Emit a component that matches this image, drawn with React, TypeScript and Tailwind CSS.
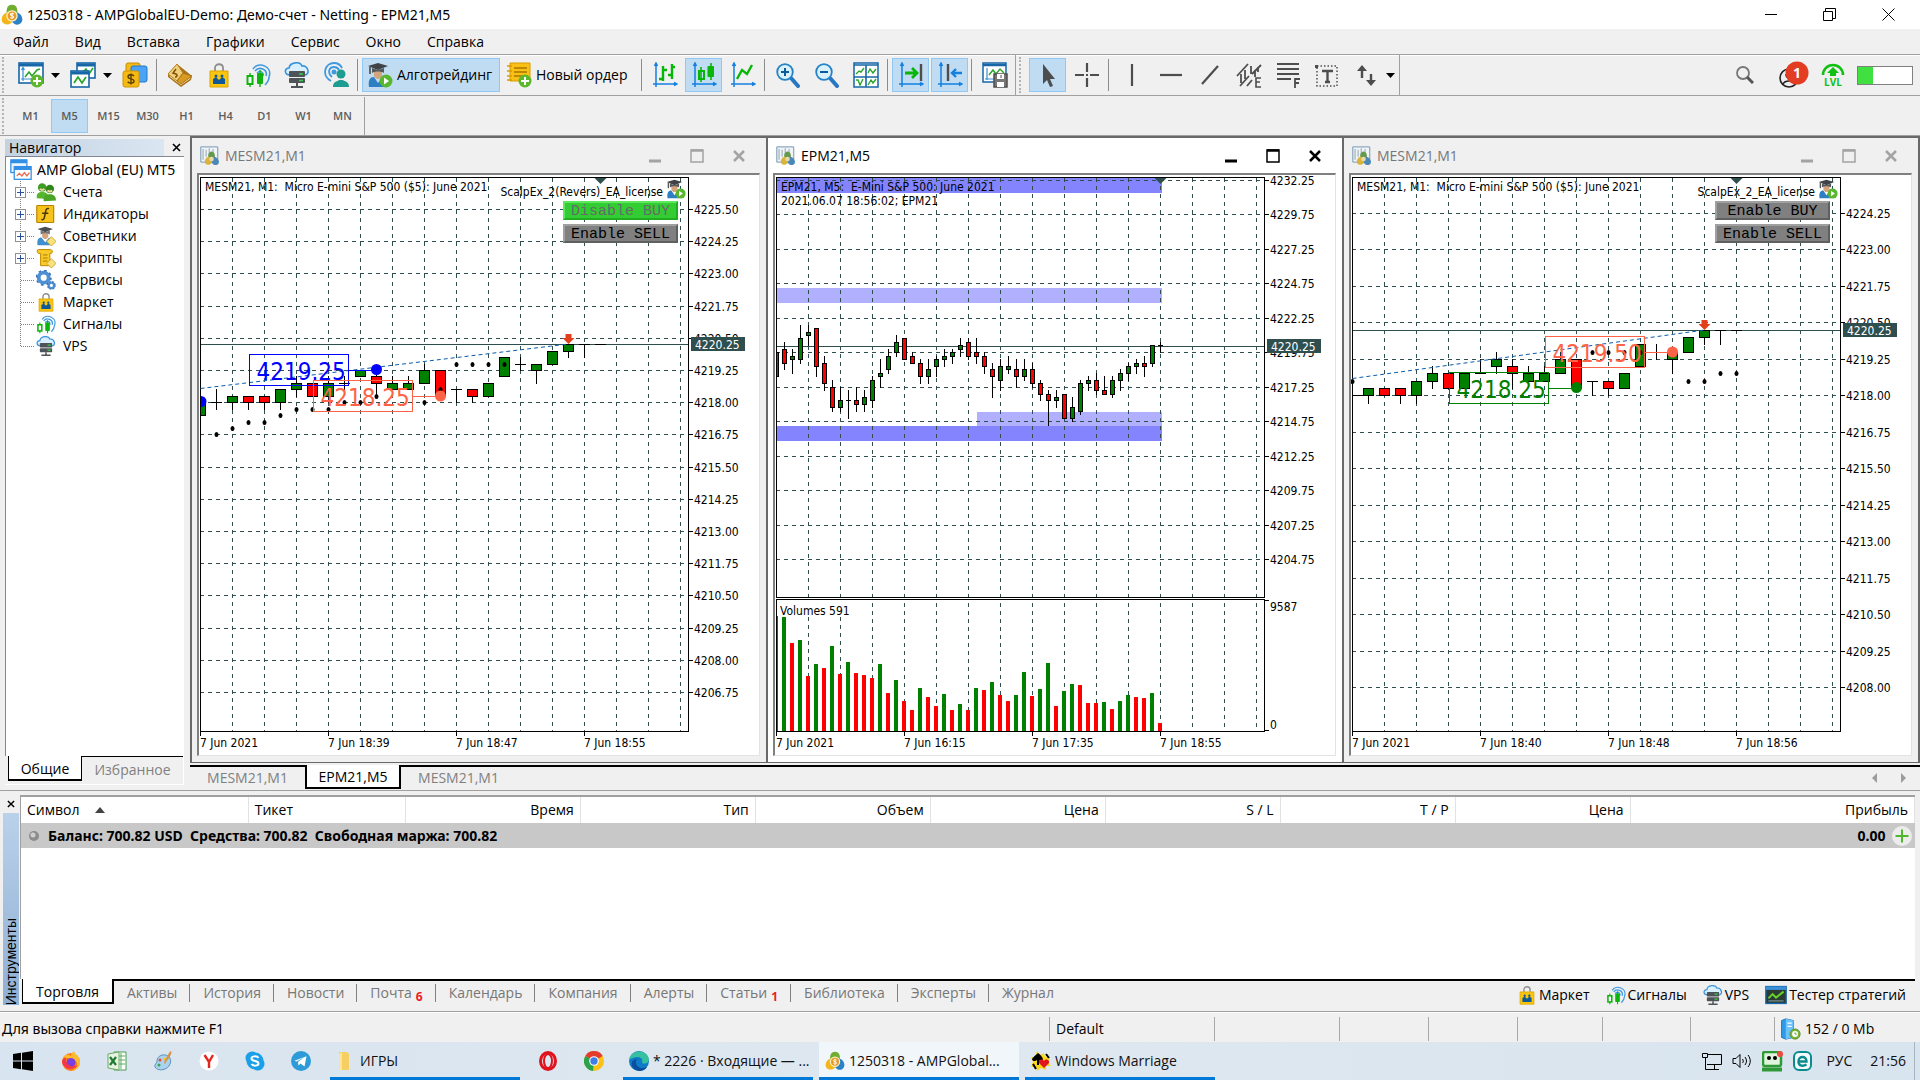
import React from "react";
import clsx from "clsx";

type Tone = "g" | "r" | "x";
// high, body top, body bottom, low, tone
type Candle = [number, number, number, number, Tone];

interface PriceTag {
  x: number;
  y: number;
  text: string;
  color: string;
  dotX: number;
  dotY: number;
}

interface ChartProps {
  title: string;
  note?: string;
  firstPrice: number;
  priceStep: number;
  firstY: number;
  stepY: number;
  rows: number;
  candles: Candle[];
  candleGap: number;
  bodyWidth: number;
  bidY: number;
  markerX: number;
  times: string[];
  bands?: [number, number, number, string][];
  volumes?: [number, Tone][];
  dots?: [number, number][];
  trend?: [number, number, number, number];
  tags?: PriceTag[];
  expert?: string;
  entryY?: number;
}

const GREEN = "#008000";
const RED = "#ff0000";
const SLATE = "#2f4f4f";

/* ---------- data ---------- */

// ticks of 0.25 below the first price on the scale
const candlesRevers: Candle[] = [
  [30, 30, 32, 32, "g"], [28, 30, 30, 31, "x"], [29, 29, 30, 31, "g"], [29, 29, 30, 31, "r"],
  [29, 29, 30, 31, "r"], [28, 28, 30, 31, "g"], [26, 27, 28, 29, "g"], [27, 27, 29, 29, "r"],
  [26, 27, 29, 30, "g"], [26, 27, 27, 28, "x"], [25, 25, 26, 26, "g"], [25, 26, 27, 29, "r"],
  [26, 27, 28, 28, "g"], [26, 27, 28, 28, "g"], [24, 25, 27, 27, "g"], [25, 25, 29, 29, "r"],
  [28, 28, 28, 30, "x"], [28, 28, 29, 30, "r"], [27, 27, 29, 29, "g"], [23, 23, 26, 26, "g"],
  [23, 24, 24, 25, "x"], [24, 24, 25, 27, "g"], [22, 22, 24, 24, "g"], [21, 21, 22, 23, "g"],
  [21, 21, 21, 23, "x"], [21, 21, 21, 21, "x"],
];

const dotsRevers: [number, number][] = [
  [1, 35], [2, 34], [3, 33], [4, 33], [5, 32], [6, 31], [7, 31], [8, 31], [9, 30], [10, 30],
  [11, 29], [14, 30], [15, 28], [16, 24], [17, 24], [18, 24], [19, 24],
];

const candlesMicro: Candle[] = [
  [25, 25, 25, 25, "x"], [24, 24, 25, 26, "g"], [24, 24, 25, 25, "r"], [24, 24, 25, 26, "r"],
  [23, 23, 25, 26, "g"], [21, 22, 23, 24, "g"], [22, 22, 24, 24, "r"], [22, 22, 24, 24, "g"],
  [20, 22, 22, 22, "x"], [19, 20, 21, 22, "g"], [20, 21, 22, 24, "r"], [21, 22, 23, 23, "g"],
  [21, 22, 23, 23, "g"], [19, 20, 22, 22, "g"], [20, 20, 24, 24, "r"], [23, 23, 23, 25, "x"],
  [23, 23, 24, 25, "r"], [22, 22, 24, 24, "g"], [18, 18, 21, 21, "g"], [18, 19, 19, 20, "x"],
  [19, 19, 20, 22, "g"], [17, 17, 19, 19, "g"], [16, 16, 17, 18, "g"], [16, 16, 16, 18, "x"],
  [16, 16, 16, 16, "x"],
];

const dotsMicro: [number, number][] = [
  [0, 23], [15, 19], [16, 19], [17, 19], [18, 19], [21, 23], [22, 23], [23, 22], [24, 22],
];

const candlesMini: Candle[] = [
  [50, 50, 57, 57, "g"], [47, 49, 53, 55, "r"], [49, 51, 52, 56, "g"], [42, 46, 52, 53, "g"],
  [42, 44, 45, 48, "g"], [43, 43, 54, 57, "r"], [51, 53, 59, 61, "r"], [58, 60, 66, 67, "r"],
  [60, 64, 66, 67, "g"], [61, 64, 64, 69, "x"], [60, 64, 65, 67, "r"], [61, 63, 65, 67, "g"],
  [57, 58, 64, 66, "g"], [52, 56, 57, 60, "g"], [49, 51, 55, 56, "g"], [45, 47, 50, 51, "g"],
  [46, 46, 52, 52, "r"], [50, 51, 53, 53, "r"], [52, 53, 57, 59, "r"], [52, 55, 57, 59, "g"],
  [51, 52, 54, 57, "g"], [49, 51, 52, 54, "g"], [49, 50, 51, 53, "g"], [46, 48, 49, 51, "g"],
  [46, 47, 51, 52, "r"], [46, 50, 51, 53, "r"], [50, 51, 54, 56, "r"], [53, 55, 57, 63, "r"],
  [52, 54, 58, 61, "g"], [51, 54, 55, 56, "g"], [52, 55, 57, 60, "r"], [52, 55, 57, 58, "g"],
  [53, 55, 59, 60, "r"], [58, 59, 62, 64, "r"], [61, 62, 64, 71, "r"], [61, 63, 64, 66, "g"],
  [62, 62, 69, 69, "r"], [63, 66, 69, 70, "g"], [58, 59, 67, 68, "g"], [57, 58, 59, 61, "g"],
  [56, 58, 61, 62, "r"], [57, 61, 62, 62, "r"], [57, 58, 62, 63, "g"], [55, 56, 58, 61, "g"],
  [53, 54, 56, 58, "g"], [52, 53, 54, 56, "g"], [51, 53, 54, 57, "r"], [48, 48, 53, 54, "g"],
  [47, 48, 48, 50, "x"],
];

const volumesMini: [number, Tone][] = [
  [115, "g"], [114, "g"], [88, "r"], [91, "g"], [55, "r"], [67, "g"], [63, "r"], [85, "g"],
  [57, "r"], [69, "g"], [58, "r"], [56, "r"], [53, "r"], [67, "g"], [38, "r"], [51, "g"],
  [30, "r"], [21, "r"], [43, "g"], [34, "r"], [25, "r"], [37, "g"], [21, "r"], [27, "g"],
  [21, "r"], [43, "g"], [41, "r"], [49, "g"], [36, "r"], [30, "r"], [36, "g"], [59, "g"],
  [35, "r"], [42, "g"], [68, "g"], [25, "r"], [40, "g"], [47, "g"], [46, "r"], [28, "r"],
  [28, "r"], [29, "g"], [22, "r"], [30, "g"], [36, "g"], [34, "r"], [33, "r"], [38, "g"],
  [8, "r"],
];

/* ---------- icons ---------- */

const Svg = ({ size = 26, box = 26, children }: { size?: number; box?: number; children: React.ReactNode }) => (
  <svg width={size} height={size} viewBox={`0 0 ${box} ${box}`} fill="none" className="shrink-0">
    {children}
  </svg>
);

const Plus = ({ x, y }: { x: number; y: number }) => (
  <g>
    <circle cx={x} cy={y} r="6.5" fill="#5cb72b" />
    <path d={`M${x - 4} ${y}h8M${x} ${y - 4}v8`} stroke="#fff" strokeWidth="2" />
  </g>
);

const NewChartIcon = () => (
  <Svg>
    <rect x="1" y="1" width="24" height="20" fill="#fff" stroke="#1666a8" strokeWidth="1.6" />
    <path d="M1 3h24" stroke="#1666a8" strokeWidth="3" />
    <path d="M5 6v13M3 17h18M3.500 8 5 5.500 6.500 8" stroke="#3a8fd6" strokeWidth="1.2" />
    <path d="m7 15 4-5 3 4 5-6 3-1" stroke="#2ba52b" strokeWidth="1.6" />
    <Plus x={19} y={19} />
  </Svg>
);

const ProfilesIcon = () => (
  <Svg>
    <rect x="7" y="1" width="18" height="15" fill="#fff" stroke="#1666a8" strokeWidth="1.6" />
    <path d="M7 3h18" stroke="#1666a8" strokeWidth="3" />
    <path d="m12 11 4-4 3 5 4-6" stroke="#2ba52b" strokeWidth="1.6" />
    <rect x="1" y="9" width="18" height="16" fill="#fff" stroke="#1666a8" strokeWidth="1.6" />
    <path d="M1 11h18" stroke="#1666a8" strokeWidth="3" />
    <path d="m4 21 4-6 4 6 4-6" stroke="#2ba52b" strokeWidth="1.8" />
  </Svg>
);

const DollarIcon = () => (
  <Svg>
    <rect x="4" y="1" width="14" height="14" rx="2" fill="#f5b916" stroke="#c98c00" />
    <rect x="9" y="4" width="16" height="16" rx="2" fill="#4aa3f5" stroke="#2479c9" />
    <rect x="1" y="9" width="16" height="16" rx="2" fill="#f5b916" stroke="#d09500" />
    <path d="M12 14c-2-2-6-1.500-6 .800 0 2.700 6 1.500 6 4.400 0 2.300-4.500 2.600-6.300.500M9 11.500v11" stroke="#5b3f00" strokeWidth="1.400" />
  </Svg>
);

const BookIcon = () => (
  <Svg>
    <path d="M1 12 10 2l15 12-1 4-10 7L1 15z" fill="#a8741b" />
    <path d="m3 14 11 8 9-6" stroke="#fff2cb" strokeWidth="1.500" />
    <path d="M1 12 10 2l6 9-6 8z" fill="#f0cf7c" stroke="#b98424" />
    <path d="m10 19 6-8 9 3-11 8z" fill="#d99a20" stroke="#a8741b" />
    <path d="m9 7-3 4 3 1c2 1 1 3-1 3" stroke="#7d5106" strokeWidth="1.500" />
  </Svg>
);

const BagIcon = ({ size = 26 }: { size?: number }) => (
  <Svg size={size}>
    <path d="M9 10V6c0-5 8-5 8 0v4" stroke="#8e8e8e" strokeWidth="1.800" />
    <path d="M4 9h18v16H4z" fill="#fcc50d" stroke="#dca300" />
    <path d="M7 22v-5l3-2 3 3 3-3 3 2v5z" fill="#0f5a96" />
    <circle cx="10" cy="14" r="1.500" fill="#0f5a96" />
    <circle cx="16" cy="14" r="1.500" fill="#0f5a96" />
  </Svg>
);

const SignalIcon = ({ size = 26 }: { size?: number }) => (
  <Svg size={size}>
    <path d="M8 7c5-8 20-3 16 8M10 9c4-5 13-2 11 5M12 11c3-3 7-1 6 3M24 15c0 3-2 6-4 8" stroke="#3f9ae0" strokeWidth="1.600" />
    <path d="M5 11v14M15 8v17" stroke="#0bb50b" strokeWidth="1.400" />
    <rect x="2.500" y="14" width="5" height="8" fill="#fff" stroke="#0bb50b" strokeWidth="2" />
    <rect x="12" y="11" width="6" height="11" rx="1" fill="#0bb50b" />
  </Svg>
);

const VpsIcon = ({ size = 26 }: { size?: number }) => (
  <Svg size={size}>
    <path d="M6 13c-6 0-6-7-1-7 1-6 11-7 13-2 6-1 9 9 2 9z" fill="#d8effd" stroke="#3b93d8" strokeWidth="1.600" />
    <rect x="5" y="9" width="16" height="6" rx="1" fill="#4d5357" />
    <rect x="5" y="16" width="16" height="5" rx="1" fill="#4d5357" />
    <path d="M13 21v4M7 25h12" stroke="#4d5357" strokeWidth="2" />
    <path d="M15 12h4M15 18.500h4" stroke="#35d04b" strokeWidth="1.600" />
  </Svg>
);

const CommunityIcon = () => (
  <Svg>
    <path d="M8 19C-2 13 2 1 11 1c5 0 7 3 8 5M9 15C4 11 6 5 11 5c3 0 4 1 5 3" stroke="#3f9ae0" strokeWidth="1.800" />
    <circle cx="11" cy="10" r="2.500" fill="#3f9ae0" />
    <circle cx="18" cy="12" r="4.500" fill="#1d9c91" />
    <path d="M10 25c0-6 4-5 6-7h4c2 2 6 1 6 7z" fill="#1d9c91" />
  </Svg>
);

const ExpertIcon = ({ size = 26 }: { size?: number }) => (
  <Svg size={size}>
    <path d="M2 25c-1-7 1-10 5-10l4 6 5-6 5 4-4 6z" fill="#2d7fc1" />
    <path d="M7 8h8v6c-2 4-6 4-8 0z" fill="#d4a47d" />
    <path d="m1 4 10-3 10 3-10 4z" fill="#3f4347" />
    <path d="M5 6v5c3-2 9-2 12 0V6l-6 2z" fill="#55595c" />
    <path d="M3 5v7" stroke="#3f4347" strokeWidth="1.500" />
    <circle cx="19" cy="19" r="6.500" fill="#58b72f" />
    <path d="m17 15.500 5 3.500-5 3.500z" fill="#fff" />
  </Svg>
);

const NewOrderIcon = () => (
  <Svg>
    <path d="M4 1h20v18H4z" fill="#fbc015" stroke="#d99c00" />
    <path d="M1 4h5M1 9h5M1 14h5M1 18h5" stroke="#d99c00" strokeWidth="1.600" />
    <path d="M8 6h13M8 10h13M8 14h8" stroke="#a87600" strokeWidth="1.500" />
    <Plus x={19} y={19} />
  </Svg>
);

const Axes = () => (
  <path d="M4 1v24M1 22h24M2.500 4 4 1l1.500 3M22 20.500 25 22l-3 1.500" stroke="#1480e0" strokeWidth="1.500" />
);

const BarsIcon = () => (
  <Svg><Axes /><path d="M11 4v15M7 17h4M11 8h4M20 2v15M16 13h4M20 5h3" stroke="#07b607" strokeWidth="2.400" /></Svg>
);

const CandlesIcon = () => (
  <Svg>
    <Axes />
    <path d="M10 5v15M20 1v17" stroke="#07b607" strokeWidth="1.600" />
    <rect x="8" y="9" width="5" height="8" stroke="#07b607" strokeWidth="2" />
    <rect x="16.500" y="4" width="6.500" height="11" rx="1" fill="#07b607" />
  </Svg>
);

const LineIcon = () => (
  <Svg><Axes /><path d="m7 17 5-9 5 4 5-9" stroke="#07b607" strokeWidth="2.400" /></Svg>
);

const ZoomIcon = ({ plus }: { plus?: boolean }) => (
  <Svg>
    <path d="m16 16 7 8" stroke="#2677c4" strokeWidth="4" strokeLinecap="round" />
    <circle cx="10" cy="10" r="7.800" fill="#d9f1fb" stroke="#2582c4" strokeWidth="1.800" />
    <path d="M6 10h8" stroke="#0b5a9c" strokeWidth="2" />
    {plus && <path d="M10 6v8" stroke="#0b5a9c" strokeWidth="2" />}
  </Svg>
);

const TileIcon = () => (
  <Svg>
    <rect x="1" y="1" width="24" height="24" fill="#fff" stroke="#1666a8" strokeWidth="1.500" />
    <path d="M1 3h24M1 15h24M13 3v22" stroke="#1666a8" strokeWidth="1.600" />
    <path d="m3 12 3-3 2 1 3-4M15 11l2-4 3 4 3-4M3 18l2 0 2 5 3-6M15 23l3-5 2 3 3-4" stroke="#2ba52b" strokeWidth="1.400" />
  </Svg>
);

const ScrollEndIcon = () => (
  <Svg>
    <Axes />
    <path d="M7 11h12M14 6l5 5-5 5" stroke="#07b607" strokeWidth="2.800" />
    <path d="M23 2v17" stroke="#4d4d4d" strokeWidth="2.400" />
  </Svg>
);

const ShiftIcon = () => (
  <Svg>
    <Axes />
    <path d="M11 2v17" stroke="#4d4d4d" strokeWidth="2.400" />
    <path d="M25 11H15M19 7l-4 4 4 4" stroke="#1480e0" strokeWidth="2.400" />
  </Svg>
);

const TemplateIcon = () => (
  <Svg>
    <rect x="1" y="1" width="23" height="19" fill="#fff" stroke="#1666a8" strokeWidth="1.500" />
    <path d="M1 3h23" stroke="#1666a8" strokeWidth="2.500" />
    <path d="M5 6v12M3 17h10" stroke="#3a8fd6" strokeWidth="1.200" />
    <path d="m7 13 4-5 3 4 4-5 4 4" stroke="#2ba52b" strokeWidth="1.500" />
    <path d="M12 12h13v13H12z" fill="#777" stroke="#4d4d4d" strokeWidth="1.500" />
    <path d="M15 12h7v5h-7zM15 20h7v5h-7z" fill="#fff" />
    <path d="M19 13v3" stroke="#4d4d4d" />
  </Svg>
);

const CursorIcon = () => (
  <Svg><path d="M8 2v20l4-4 3 7 3-1-3-7h5z" fill="#4d4d4d" /></Svg>
);

const CrosshairIcon = () => (
  <Svg><path d="M13 1v9M13 16v9M1 13h9M16 13h9M12 13h2" stroke="#4d4d4d" strokeWidth="2.200" /></Svg>
);

const LineTool = ({ d }: { d: string }) => (
  <Svg><path d={d} stroke="#4d4d4d" strokeWidth="2.200" /></Svg>
);

const ChannelIcon = () => (
  <Svg>
    <path d="M1 14 12 2M4 24l9-10M16 12l9-9M5 12v9M9 8v9M15 4v8M19 8v7M11 24l5-6M22 5v5" stroke="#4d4d4d" strokeWidth="1.800" />
    <path d="M25 16h-5v9h5M20 20h4" stroke="#4d4d4d" strokeWidth="1.600" />
  </Svg>
);

const FiboIcon = () => (
  <Svg>
    <path d="M2 2h22M2 7h22M2 12h22M2 17h14" stroke="#4d4d4d" strokeWidth="2.200" />
    <path d="M25 17h-5v9M20 21h4" stroke="#4d4d4d" strokeWidth="1.800" />
  </Svg>
);

const TextIcon = () => (
  <Svg>
    <rect x="3" y="4" width="20" height="20" stroke="#4d4d4d" strokeWidth="1.500" strokeDasharray="1.500 2" />
    <path d="M8 9h11M13.500 9v11M11 20h5" stroke="#4d4d4d" strokeWidth="2.400" />
    <path d="M1 3h3v3H1z" fill="#4d4d4d" />
  </Svg>
);

const ArrowsIcon = () => (
  <Svg>
    <path d="M9 6v10M18 12v8" stroke="#4d4d4d" strokeWidth="2.400" />
    <path d="m4 9 5-6 5 6zM13 18l5 6 5-6z" fill="#4d4d4d" />
  </Svg>
);

const MetaLogo = ({ size = 22 }: { size?: number }) => (
  <Svg size={size}>
    <path d="M13 1c6 0 7 6 6 11l-6 4-6-4C6 7 7 1 13 1z" fill="#6fae2e" />
    <path d="M7 10c-5 1-8 8-5 12 4 4 10 2 12-2V12z" fill="#f2b61b" />
    <path d="M19 10c5 1 8 8 5 12-3 4-9 3-11-2l1-8z" fill="#2b83c6" />
    <circle cx="13" cy="14" r="6" fill="#e79a26" stroke="#fff1c9" strokeWidth="1.500" />
    <path d="M15 12c-1-1.500-4-1-4 .500 0 2 4 1 4 3 0 1.500-3 2-4 .500M13 10.500v7" stroke="#fff" strokeWidth="1.200" />
  </Svg>
);

const ChartWindowIcon = () => (
  <Svg size={20}>
    <rect x="1" y="1" width="22" height="20" rx="1" fill="#eef4f8" stroke="#8fa9bd" strokeWidth="1.600" />
    <path d="M4 4v14M8 5v9M12 3v9M17 4v7" stroke="#7c8b96" />
    <path d="M15 7c4 0 5 5 4 9l-4 3-4-3c-1-4 0-9 4-9z" fill="#659a4a" />
    <path d="M11 14c-4 1-6 6-4 9 3 3 7 1 9-2v-5z" fill="#d8b43d" />
    <path d="M19 14c4 1 7 6 5 9-2 3-7 2-9-2v-4z" fill="#4a88b8" />
    <circle cx="15" cy="17" r="3" fill="#e8d9a5" />
  </Svg>
);

const UsersIcon = () => (
  <Svg size={20}>
    <circle cx="8" cy="7" r="5.500" fill="#3f9b23" />
    <path d="M1 21c-1-8 5-8 8-8 5 0 8 4 7 9z" fill="#56b52e" />
    <circle cx="18" cy="9" r="5.500" fill="#2f8619" />
    <path d="M10 25c-1-8 4-9 8-9s8 2 8 8z" fill="#4aa527" />
    <path d="M5 9c2 2 4 2 6 0M15 11c2 2 4 2 6 0" stroke="#f2d7a2" strokeWidth="2.500" />
  </Svg>
);

const FunctionIcon = () => (
  <Svg size={20}>
    <rect x="1" y="2" width="22" height="22" rx="1" fill="#f6c21c" stroke="#b68300" strokeWidth="1.500" />
    <path d="M17 6c-3-1-4 1-4.500 4L11 17c-.500 3-2 4-4 3M8 12h8" stroke="#4b3600" strokeWidth="2" />
  </Svg>
);

const AdvisorIcon = () => (
  <Svg size={20}>
    <path d="M2 25c-1-7 1-10 5-10l5 6 5-6 4 4-3 6z" fill="#3f8fd0" />
    <path d="M8 8h8v6c-2 4-6 4-8 0z" fill="#d4a47d" />
    <path d="m2 4 10-3 10 3-10 4z" fill="#4a4d50" />
    <path d="M6 6v5c3-2 9-2 12 0V6l-6 2z" fill="#707477" />
    <path d="m20 14 6 6-6 6-6-6z" fill="#f9e27c" stroke="#c49a16" />
  </Svg>
);

const ScriptIcon = () => (
  <Svg size={20}>
    <path d="M3 2h15c4 0 4 4 2 5h-2v16H6V7H3c-2-1-2-5 0-5z" fill="#f8c928" stroke="#bd8a00" strokeWidth="1.300" />
    <path d="M9 9h6M9 13h6M9 17h6" stroke="#b27d00" strokeWidth="1.300" />
    <path d="m20 14 6 6-6 6-6-6z" fill="#f9e27c" stroke="#c49a16" />
  </Svg>
);

const GearsIcon = () => (
  <Svg size={20}>
    <circle cx="10" cy="10" r="6.500" stroke="#4f8fd3" strokeWidth="5" />
    <circle cx="10" cy="10" r="9.500" stroke="#3a76b8" strokeWidth="2" strokeDasharray="3.500 4" />
    <circle cx="20" cy="20" r="3.500" stroke="#4f8fd3" strokeWidth="3" />
    <circle cx="20" cy="20" r="5" stroke="#3a76b8" strokeWidth="1.500" strokeDasharray="2 2" />
  </Svg>
);

const RootIcon = () => (
  <Svg size={22}>
    <rect x="1" y="1" width="19" height="15" fill="#eaf5ff" stroke="#3190e5" strokeWidth="1.500" />
    <path d="M1 3h19" stroke="#3190e5" strokeWidth="4" />
    <rect x="5" y="9" width="20" height="15" fill="#fff" stroke="#3190e5" strokeWidth="1.500" />
    <path d="M5 11h20" stroke="#3190e5" strokeWidth="4" />
    <path d="m8 20 3-3 3 3 3-4 3 4 3-4" stroke="#ef6b51" strokeWidth="1.600" />
  </Svg>
);

const TesterIcon = () => (
  <Svg size={22}>
    <rect x="1" y="3" width="24" height="20" fill="#2b3a33" stroke="#1666a8" strokeWidth="1.600" />
    <path d="M1 5h24" stroke="#3a8fd6" strokeWidth="4" />
    <path d="m4 17 5-5 4 4 9-7" stroke="#66d12c" strokeWidth="2.400" />
    <path d="M4 20h18" stroke="#9bb" />
  </Svg>
);

const ServerIcon = () => (
  <Svg size={22}>
    <path d="m3 3 5-2 9 2v20l-9 2-5-2z" fill="#2f9be8" stroke="#1a6fb2" />
    <path d="m8 1 9 2v20l-9 2z" fill="#6cc3fb" />
    <path d="M10 6h5M10 10h5" stroke="#fff" strokeWidth="1.500" />
    <circle cx="19" cy="19" r="6" fill="#7cb73a" stroke="#55852a" />
    <circle cx="19" cy="19" r="3.500" fill="#fff" />
    <path d="M19 17v2h2" stroke="#55852a" />
  </Svg>
);

/* ---------- chart ---------- */

const Chart = (p: ChartProps) => {
  const tick = p.stepY / (p.priceStep * 4);
  const yOf = (t: number) => Math.round(p.firstY + t * tick);
  const xOf = (i: number) => 1 + i * p.candleGap;
  const half = (p.bodyWidth - 1) / 2;
  const cols = Array.from({ length: 15 }, (_, i) => 33.5 + i * 32);
  const rows = Array.from({ length: p.rows }, (_, i) => Math.round(p.firstY + i * p.stepY) + 0.5);
  const mainBottom = p.volumes ? 422.5 : 556.5;

  return (
    <svg className="block h-[580px] w-full font-['DejaVu_Sans_Condensed','Noto_Sans',sans-serif] text-[12px]">
      <g shapeRendering="crispEdges">
        {p.bands?.map(([x, y, h, fill]) => (
          <rect key={`${x}-${y}`} x={x} y={y} width={387 - x} height={h} fill={fill} />
        ))}
        <g stroke={SLATE} strokeDasharray="4 4">
          {cols.map((x) => (
            <path key={x} d={`M${x} 3V${mainBottom}`} />
          ))}
          {p.volumes && cols.map((x, i) => <path key={x} d={`M${x} ${i < 2 ? 442 : 428}V556`} />)}
          {rows.map((y) => (
            <path key={y} d={`M1 ${y}H489`} />
          ))}
        </g>
        <path d={`M1 ${p.bidY}.5H489`} stroke={SLATE} />
        {p.volumes?.map(([h, tone], i) => (
          <rect key={i} x={Math.max(2, i * 8 - 1)} y={556 - h} width={i ? 4 : 1} height={h} fill={tone === "g" ? GREEN : RED} />
        ))}
        <path
          d={p.volumes ? "M1.5 2.5h488v420H1.500zM1.500 424.500h488v132H1.500z" : "M1.5 2.5h488v554H1.500z"}
          stroke="#000"
          fill="none"
        />
        {p.candles.map(([high, top, bottom, low, tone], i) => (
          <g key={i}>
            <path d={`M${xOf(i) + 0.5} ${yOf(high)}V${yOf(low) + (high === low ? 0 : 1)}`} stroke="#000" />
            {tone === "x" ? (
              <path d={`M${Math.max(1, xOf(i) - half)} ${yOf(top) + 0.5}h${p.bodyWidth}`} stroke="#000" />
            ) : (
              <rect
                x={Math.max(1.5, xOf(i) - half + 0.5)}
                y={yOf(top) + 0.5}
                width={i ? p.bodyWidth - 1 : half}
                height={yOf(bottom) - yOf(top)}
                fill={tone === "g" ? GREEN : RED}
                stroke="#000"
              />
            )}
          </g>
        ))}
        {rows.map((y) => (
          <path key={y} d={`M490 ${y}h4`} stroke="#000" />
        ))}
        {p.times.map((t, i) => (
          <path key={t} d={`M${1.5 + i * 128} 557v4`} stroke="#000" />
        ))}
        {p.volumes && <path d="M490 425.500h4M490 555.500h4" stroke="#000" />}
      </g>

      {p.dots?.map(([i, t]) => (
        <ellipse key={i} cx={xOf(i) + 0.5} cy={yOf(t) + 0.5} rx="2" ry="2.500" />
      ))}
      {p.entryY && <path d={`M2 ${p.entryY - 5.5}a5.500 5.500 0 0 1 0 11z`} fill="#0000ff" />}
      <path d={`M${p.markerX - 6} 3h12l-6 6z`} fill={SLATE} />

      {p.trend && (
        <>
          <path d={`M${p.trend[0]} ${p.trend[1]}L${p.trend[2]} ${p.trend[3]}`} stroke="#0b5cad" strokeDasharray="4 3" />
          <path d={`M${p.trend[2] - 3} ${p.trend[3] - 10}h6v4h3l-6 6-6-6h3z`} fill="#e2401c" />
        </>
      )}
      {p.tags?.map((tag) => (
        <g key={tag.text}>
          <rect x={tag.x} y={tag.y} width="99" height="31" fill="none" stroke={tag.color} />
          <path d={`M${tag.x + 99} ${tag.y + 16}H${tag.dotX}`} stroke={tag.color} />
          <circle cx={tag.dotX} cy={tag.dotY} r="5.500" fill={tag.color} />
          <text x={tag.x + 7} y={tag.y + 25} fill={tag.color} className="text-[24px]">{tag.text}</text>
        </g>
      ))}

      <text x="6" y="16">{p.title}</text>
      {p.note && <text x="6" y="30">{p.note}</text>}
      {p.expert && <text x="464" y="21" textAnchor="end">{p.expert}</text>}
      {p.volumes && (
        <>
          <text x="5" y="440">Volumes 591</text>
          <text x="495" y="436">9587</text>
          <text x="495" y="554">0</text>
        </>
      )}
      {rows.map((y, i) => (
        <text key={y} x="495" y={y + 4}>{(p.firstPrice - i * p.priceStep).toFixed(2)}</text>
      ))}
      <rect x="492" y={p.bidY - 7} width="54" height="14" fill={SLATE} />
      <text x="496" y={p.bidY + 5} fill="#fff">4220.25</text>
      {p.times.map((t, i) => (
        <text key={t} x={1 + i * 128} y="572">{t}</text>
      ))}
    </svg>
  );
};

const TradeButton = ({ label, on }: { label: string; on?: boolean }) => (
  <button
    className={clsx(
      "h-[19px] w-[115px] border-2 text-center font-['Liberation_Mono',monospace] text-[15px] leading-[17px]",
      on
        ? "border-t-[#5ee85e] border-r-[#1fae1f] border-b-[#1fae1f] border-l-[#5ee85e] bg-[#32cd32] text-[#696969]"
        : "border-t-[#a0a0a0] border-r-[#606060] border-b-[#606060] border-l-[#a0a0a0] bg-[#808080] text-black"
    )}
  >
    {label}
  </button>
);

interface WindowProps {
  name: string;
  active?: boolean;
  buttons?: { label: string; on?: boolean }[];
  children: React.ReactNode;
}

const ChartWindow = ({ name, active, buttons, children }: WindowProps) => (
  <section
    className={clsx(
      "min-w-0 flex-1 border-l-2 border-[#696969] pr-1.5 pb-1.5 pl-[5px]",
      active ? "bg-white" : "bg-[#f0f0f0]"
    )}
  >
    <header className={clsx("flex h-[35px] items-center pr-3.5 pl-[3px]", active ? "text-black" : "text-[#777]")}>
      <ChartWindowIcon />
      <h2 className="ml-[5px] flex-1 text-sm">{name}</h2>
      <div className={clsx("flex gap-7", active ? "text-black" : "text-[#a3a3a3]")}>
        <button aria-label="Свернуть">
          <svg width="14" height="14" viewBox="0 0 14 14"><path d="M1 12h12" stroke="currentColor" strokeWidth="3" /></svg>
        </button>
        <button aria-label="Развернуть">
          <svg width="14" height="14" viewBox="0 0 14 14" fill="none"><path d="M1 1h12v12H1z" stroke="currentColor" strokeWidth="1.500" /><path d="M1 1.500h12" stroke="currentColor" strokeWidth="2.500" /></svg>
        </button>
        <button aria-label="Закрыть">
          <svg width="14" height="14" viewBox="0 0 14 14"><path d="m2 2 10 10M12 2 2 12" stroke="currentColor" strokeWidth="2.500" /></svg>
        </button>
      </div>
    </header>
    <div className="relative border-t-2 border-r border-b border-l-2 border-t-[#808080] border-r-[#e3e3e3] border-b-[#e3e3e3] border-l-[#808080] bg-white">
      {children}
      {buttons && (
        <>
          <div className="absolute top-1 left-[467px]"><ExpertIcon size={20} /></div>
          <div className="absolute top-[26px] left-[364px] flex flex-col gap-1">
            {buttons.map((b) => (
              <TradeButton key={b.label} {...b} />
            ))}
          </div>
        </>
      )}
    </div>
  </section>
);

/* ---------- bars ---------- */

const Sep = () => <div className="mr-0.5 ml-px h-8 w-px bg-[#8c8c8c]" />;

const Grip = () => <div className="mr-1.5 h-9 w-0 border-l-2 border-dotted border-[#b4b4b4]" />;

const Caret = () => (
  <svg width="9" height="5" viewBox="0 0 9 5"><path d="M0 0h9L4.500 5z" /></svg>
);

const Tool = ({ label, on, children }: { label: string; on?: boolean; children: React.ReactNode }) => (
  <button
    aria-label={label}
    aria-pressed={on}
    className={clsx(
      "flex h-[34px] w-[37px] shrink-0 items-center justify-center border",
      on ? "border-[#90c8f6] bg-[#bfdcf3]" : "border-transparent"
    )}
  >
    {children}
  </button>
);

const MENU = ["Файл", "Вид", "Вставка", "Графики", "Сервис", "Окно", "Справка"];
const FRAMES = ["M1", "M5", "M15", "M30", "H1", "H4", "D1", "W1", "MN"];

const TitleBar = () => (
  <header className="flex h-[29px] items-center bg-white pl-px">
    <MetaLogo />
    <h1 className="ml-1 flex-1 font-['Noto_Sans',sans-serif] text-sm">1250318 - AMPGlobalEU-Demo: Демо-счет - Netting - EPM21,M5</h1>
    <div className="flex">
      <button aria-label="Свернуть" className="flex h-[29px] w-[58px] items-center justify-center">
        <svg width="12" height="12" viewBox="0 0 12 12"><path d="M0 5.500h12" stroke="#000" /></svg>
      </button>
      <button aria-label="Восстановить" className="flex h-[29px] w-[58px] items-center justify-center">
        <svg width="13" height="13" viewBox="0 0 13 13" fill="none" stroke="#000"><path d="M.5 3.500h9v9h-9zM2.500 3.500v-3h10v10h-3" /></svg>
      </button>
      <button aria-label="Закрыть" className="mr-0.5 flex h-[29px] w-[60px] items-center justify-center">
        <svg width="13" height="13" viewBox="0 0 13 13" stroke="#000"><path d="m.5.5 12 12M12.500.5l-12 12" /></svg>
      </button>
    </div>
  </header>
);

const Toolbar = () => (
  <div className="flex h-[42px] items-center border-t border-b border-[#a0a0a0] shadow-[inset_0_1px_0_#fff]">
    <div className="flex items-center gap-0.5 pl-0.5">
      <Grip />
      <Tool label="Новый график"><NewChartIcon /></Tool>
      <div className="w-[11px]"><Caret /></div>
      <Tool label="Профили"><ProfilesIcon /></Tool>
      <div className="w-[11px]"><Caret /></div>
      <Tool label="Символы"><DollarIcon /></Tool>
      <Sep />
      <Tool label="Стакан цен"><BookIcon /></Tool>
      <Tool label="Маркет"><BagIcon /></Tool>
      <Tool label="Сигналы"><SignalIcon /></Tool>
      <Tool label="VPS"><VpsIcon /></Tool>
      <Tool label="Сообщество"><CommunityIcon /></Tool>
      <Sep />
      <button aria-pressed="true" className="flex h-[34px] w-[138px] items-center gap-1 border border-[#90c8f6] bg-[#bfdcf3] pl-1 text-sm">
        <ExpertIcon />
        Алготрейдинг
      </button>
      <button className="flex h-[34px] w-[136px] items-center gap-1 pl-1 text-sm">
        <NewOrderIcon />
        Новый ордер
      </button>
      <Sep />
      <Tool label="Бары"><BarsIcon /></Tool>
      <Tool label="Японские свечи" on><CandlesIcon /></Tool>
      <Tool label="Линия"><LineIcon /></Tool>
      <Sep />
      <Tool label="Увеличить"><ZoomIcon plus /></Tool>
      <Tool label="Уменьшить"><ZoomIcon /></Tool>
      <Tool label="Расположить окна"><TileIcon /></Tool>
      <Sep />
      <Tool label="Автопрокрутка" on><ScrollEndIcon /></Tool>
      <Tool label="Сдвиг графика" on><ShiftIcon /></Tool>
      <Sep />
      <Tool label="Шаблоны"><TemplateIcon /></Tool>
    </div>
    <div className="mr-[3px] ml-0.5 h-10 w-px bg-[#a0a0a0]" />
    <div className="flex items-center gap-0.5">
      <Grip />
      <Tool label="Курсор" on><CursorIcon /></Tool>
      <Tool label="Перекрестие"><CrosshairIcon /></Tool>
      <Sep />
      <Tool label="Вертикальная линия"><LineTool d="M13 2v22" /></Tool>
      <Tool label="Горизонтальная линия"><LineTool d="M2 13h22" /></Tool>
      <Tool label="Трендовая линия"><LineTool d="M5 22 21 4" /></Tool>
      <Tool label="Канал"><ChannelIcon /></Tool>
      <Tool label="Фибоначчи"><FiboIcon /></Tool>
      <Tool label="Текст"><TextIcon /></Tool>
      <Tool label="Стрелки"><ArrowsIcon /></Tool>
      <Caret />
    </div>
    <div className="ml-1 h-10 w-px bg-[#a0a0a0]" />
    <div className="ml-auto flex items-center pr-[7px]">
      <button aria-label="Поиск" className="mr-[25px]">
        <svg width="18" height="18" viewBox="0 0 18 18" fill="none">
          <circle cx="7" cy="7" r="6" stroke="#777" strokeWidth="1.800" />
          <path d="m11 11 6 6" stroke="#555" strokeWidth="3" />
        </svg>
      </button>
      <button aria-label="Уведомления: 1" className="mr-3">
        <svg width="30" height="28" viewBox="0 0 30 28" fill="none">
          <circle cx="10" cy="17" r="9" stroke="#222" strokeWidth="1.600" />
          <path d="M4 23c2-4 10-4 12 0M7 13c0 5 6 5 6 0" stroke="#222" strokeWidth="1.600" />
          <circle cx="18" cy="12" r="11.500" fill="#e23c22" />
          <text x="14" y="17" fill="#fff" className="text-sm font-bold">1</text>
        </svg>
      </button>
      <div className="mr-3">
        <svg width="24" height="28" viewBox="0 0 24 28" fill="none">
          <path d="M2 14a10 10 0 0 1 20 0" stroke="#11c011" strokeWidth="2.600" />
          <path d="m12 6 6 6h-3v3H9v-3H6z" fill="#11c011" />
          <text x="3" y="25" fill="#11c011" className="text-[10px] leading-3 font-bold">LVL</text>
        </svg>
      </div>
      <div className="h-[19px] w-14 border border-[#808080] bg-white">
        <div className="h-full w-[15px] bg-[#40e040]" />
      </div>
    </div>
  </div>
);

const FrameBar = () => (
  <div className="flex h-[40px] items-center border-b border-[#a0a0a0] pt-px pl-0.5">
    <Grip />
    <div className="flex gap-0.5 pr-[3px] pl-0.5">
      {FRAMES.map((f) => (
        <button
          key={f}
          className={clsx(
            "h-[34px] w-[37px] border text-[11px] font-semibold text-[#5c5c5c]",
            f === "M5" ? "border-[#90c8f6] bg-[#bfdcf3]" : "border-transparent"
          )}
        >
          {f}
        </button>
      ))}
    </div>
    <div className="h-full w-px bg-[#a0a0a0]" />
  </div>
);

/* ---------- navigator ---------- */

const TREE: { label: string; icon: React.ReactNode; open?: boolean }[] = [
  { label: "Счета", icon: <UsersIcon />, open: true },
  { label: "Индикаторы", icon: <FunctionIcon />, open: true },
  { label: "Советники", icon: <AdvisorIcon />, open: true },
  { label: "Скрипты", icon: <ScriptIcon />, open: true },
  { label: "Сервисы", icon: <GearsIcon /> },
  { label: "Маркет", icon: <BagIcon size={20} /> },
  { label: "Сигналы", icon: <SignalIcon size={20} /> },
  { label: "VPS", icon: <VpsIcon size={20} /> },
];

const Navigator = () => (
  <aside className="flex w-[190px] shrink-0 flex-col pt-[3px] pr-[6px] pl-[5px]">
    <div className="flex h-[17px] items-center">
      <h2 className="h-full flex-1 bg-linear-to-r from-[#c3d2e1] to-[#dae6f2] pl-1 text-sm leading-[17px]">Навигатор</h2>
      <button aria-label="Закрыть" className="flex w-[20px] justify-center pl-1">
        <svg width="9" height="9" viewBox="0 0 9 9"><path d="m1 1 7 7M8 1 1 8" stroke="#000" strokeWidth="1.600" /></svg>
      </button>
    </div>
    <div className="flex-1 border-t border-l border-[#828790] bg-white pt-px pl-1">
      <div className="flex h-[23px] items-center gap-[5px] font-['Noto_Sans',sans-serif] text-sm whitespace-nowrap">
        <RootIcon />
        AMP Global (EU) MT5
      </div>
      <ul className="text-sm">
        {TREE.map((n, i) => (
          <li key={n.label} className="flex h-[22px] items-center">
            <svg width="26" height="22" viewBox="0 0 26 22" shapeRendering="crispEdges" fill="none">
              <path d={i === TREE.length - 1 ? "M10.500 0v11" : "M10.500 0v22"} stroke="#808080" strokeDasharray="1 1" />
              <path d="M11 11.500h14" stroke="#808080" strokeDasharray="1 1" />
              {n.open && (
                <>
                  <rect x="5.500" y="6.500" width="10" height="10" fill="#fff" stroke="#919191" />
                  <path d="M7 11.500h7M10.500 8v7" stroke="#2a4fa0" />
                </>
              )}
            </svg>
            {n.icon}
            <span className="ml-[7px]">{n.label}</span>
          </li>
        ))}
      </ul>
    </div>
    <div className="mb-[5px] flex h-[29px] border-r border-b border-white text-sm">
      <button className="ml-[3px] h-[25px] w-[74px] border-r border-b-2 border-l border-black bg-white pt-0.5">Общие</button>
      <button className="h-[25px] flex-1 border-t border-black pt-0.5 text-[#808080]">Избранное</button>
    </div>
  </aside>
);

const WindowTabs = () => (
  <div className="flex h-[25px] items-start text-sm">
    <button className="h-[24px] w-[115px] border-t-2 border-black text-[#808080]">MESM21,M1</button>
    <button className="h-[24px] w-24 border-r-2 border-b-2 border-l-2 border-black bg-white pt-0.5">EPM21,M5</button>
    <button className="h-[24px] w-[115px] border-t-2 border-black text-[#808080]">MESM21,M1</button>
    <div className="flex h-[24px] flex-1 items-center justify-end gap-[22px] border-t-2 border-black pr-3.5">
      <svg width="6" height="10" viewBox="0 0 6 10"><path d="M5 0v10L0 5z" fill="#9c9c9c" /></svg>
      <svg width="6" height="10" viewBox="0 0 6 10"><path d="M1 0v10l5-5z" fill="#9c9c9c" /></svg>
    </div>
  </div>
);

/* ---------- toolbox ---------- */

const COLUMNS = ["Время", "Тип", "Объем", "Цена", "S / L", "T / P", "Цена"];

const TABS: { label: string; count?: number }[] = [
  { label: "Активы" },
  { label: "История" },
  { label: "Новости" },
  { label: "Почта", count: 6 },
  { label: "Календарь" },
  { label: "Компания" },
  { label: "Алерты" },
  { label: "Статьи", count: 1 },
  { label: "Библиотека" },
  { label: "Эксперты" },
  { label: "Журнал" },
];

const Toolbox = () => (
  <section className="flex flex-1 border-b border-[#a0a0a0] pt-[4px] pb-1.5">
    <div className="flex w-[20px] shrink-0 flex-col items-center pl-0.5">
      <button aria-label="Закрыть" className="flex h-[18px] items-center">
        <svg width="8" height="8" viewBox="0 0 9 9"><path d="m1 1 7 7M8 1 1 8" stroke="#000" strokeWidth="1.600" /></svg>
      </button>
      <div className="flex w-4 flex-1 items-start bg-linear-to-b from-[#bad1ea] to-[#8fafd3]">
        <span className="mt-auto rotate-180 font-['Liberation_Sans',sans-serif] text-sm leading-4 [writing-mode:vertical-rl]">Инструменты</span>
      </div>
    </div>
    <div className="flex min-w-0 flex-1 flex-col pr-[5px]">
      <div className="flex-1 border-t-2 border-l border-[#a0a0a0] bg-white">
        <table className="w-full table-fixed border-collapse text-sm">
          <thead>
            <tr className="h-[26px] [&>th]:border-r [&>th]:border-[#e2e2e2] [&>th]:px-1.5 [&>th]:font-normal">
              <th className="w-[12%] text-left">
                <span className="flex items-center gap-4">
                  Символ
                  <svg width="10" height="6" viewBox="0 0 10 6"><path d="M0 6h10L5 0z" fill="#444" /></svg>
                </span>
              </th>
              <th className="w-[8.3%] text-left">Тикет</th>
              {COLUMNS.map((c, i) => (
                <th key={i} className="w-[9.24%] text-right">{c}</th>
              ))}
              <th className="text-right">Прибыль</th>
            </tr>
          </thead>
          <tbody>
            <tr className="h-[25px] bg-[#c8c8c8] font-['Noto_Sans',sans-serif] font-bold">
              <td colSpan={9}>
                <span className="flex items-center gap-[9px] pl-2 whitespace-pre">
                  <svg width="10" height="10" viewBox="0 0 10 10"><circle cx="5" cy="5" r="5" fill="#8c8c8c" /><circle cx="4" cy="4" r="2.500" fill="#cfcfcf" /></svg>
                  Баланс: 700.82 USD  Средства: 700.82  Свободная маржа: 700.82
                </span>
              </td>
              <td>
                <span className="flex items-center justify-end gap-1.5 pr-[3px]">
                  0.00
                  <button aria-label="Добавить">
                    <svg width="20" height="20" viewBox="0 0 20 20" className="block"><circle cx="10" cy="10" r="10" fill="#ececec" /><path d="M3.500 10h13M10 3.500v13" stroke="#4db82a" strokeWidth="2" /></svg>
                  </button>
                </span>
              </td>
            </tr>
          </tbody>
        </table>
      </div>
      <div className="flex h-[26px] items-start text-sm">
        <button className="ml-[2px] h-[25px] w-[92px] border-r-2 border-b-2 border-l border-black bg-white pt-0.5">Торговля</button>
        <div className="flex h-[25px] flex-1 items-center justify-between border-t-2 border-black">
          <div className="flex">
            {TABS.map((t, i) => (
              <button key={t.label} className={clsx("flex h-[18px] items-center pr-3 pl-[13px] leading-[18px] text-[#777]", i > 0 && "border-l border-[#808080]")}>
                {t.label}
                {t.count && <span className="mt-2 ml-1 text-xs font-bold text-[#ee1c25]">{t.count}</span>}
              </button>
            ))}
          </div>
          <div className="flex items-center gap-4 pt-1 pr-[9px]">
            <button className="flex items-center gap-0.5"><BagIcon size={20} />Маркет</button>
            <button className="flex items-center gap-0.5"><SignalIcon size={20} />Сигналы</button>
            <button className="flex items-center gap-0.5"><VpsIcon size={20} />VPS</button>
            <button className="flex items-center gap-0.5"><TesterIcon />Тестер стратегий</button>
          </div>
        </div>
      </div>
    </div>
  </section>
);

const StatusBar = () => (
  <footer className="flex h-[30px] items-center border-t border-white pt-0.5 text-sm [&>div]:h-6 [&>div]:border-l [&>div]:border-[#a8a8a8] [&>div]:leading-6">
    <span className="flex-1 pl-0.5 font-['Noto_Sans',sans-serif]">Для вызова справки нажмите F1</span>
    <div className="w-[165px] pl-1.5">Default</div>
    <div className="w-[125px]" />
    <div className="w-[89px]" />
    <div className="w-[89px]" />
    <div className="w-[85px]" />
    <div className="w-[88px]" />
    <div className="w-[84px]" />
    <div className="flex w-[146px] items-center gap-1 pl-1"><ServerIcon />152 / 0 Mb</div>
  </footer>
);

/* ---------- taskbar ---------- */

const LaunchIcon = ({ label, children }: { label: string; children: React.ReactNode }) => (
  <button aria-label={label} className="flex h-full w-[46px] items-center justify-center">
    <Svg size={20} box={20}>{children}</Svg>
  </button>
);

const Task = ({ label, wide, active, children }: { label: string; wide?: boolean; active?: boolean; children: React.ReactNode }) => (
  <button
    className={clsx(
      "flex h-full items-center gap-1 border-b-[3px] border-[#0078d7] pt-0.5 pl-1.5 text-sm whitespace-nowrap",
      wide ? "w-[200px]" : "w-[190px]",
      active && "bg-[#f1f6fa]"
    )}
  >
    {children}
    {label}
  </button>
);

const Taskbar = () => (
  <nav className="flex h-[38px] items-center bg-linear-to-r from-[#d8e4ef] via-[#dfe8f0] to-[#d8e4ee] text-[#111]">
    <LaunchIcon label="Пуск"><path d="m0 3 8-1.200V9.500H0zM9 1.700 20 0v9.500H9zM0 10.500h8v7.700L0 17zM9 10.500h11V20L9 18.300z" fill="#000" /></LaunchIcon>
    <div className="ml-0.5 flex h-full">
      <LaunchIcon label="Firefox">
        <circle cx="10" cy="11" r="9" fill="#ff7a1a" />
        <path d="M2 6c3-3 6-2 8-1 0-3 2-4 3-5 1 4 6 5 6 11 0 6-5 9-9 9 8-3 8-11 1-12z" fill="#ffbd2e" />
        <circle cx="10" cy="11.500" r="4.500" fill="#7a3fe0" />
        <path d="M1 11c2 8 12 9 16 3-3 2-8 2-10-1-2-1-3-4-2-6-2 0-4 2-4 4z" fill="#f4364c" />
      </LaunchIcon>
      <LaunchIcon label="Excel">
        <path d="M7 1h12v18H7z" fill="#fff" stroke="#4a9b4f" />
        <path d="M10 5h8M10 9h8M10 13h8M14 2v16" stroke="#5fae5f" />
        <path d="m1 3 11-2v18L1 17z" fill="#e8f3e4" stroke="#6dab65" />
        <path d="m3 6 6 8M9 6l-6 8" stroke="#1f7a32" strokeWidth="2.200" />
      </LaunchIcon>
      <LaunchIcon label="Paint">
        <path d="M9 4c7-1 10 4 8 9-2 6-12 8-15 3-1-3 2-3 2-6 0-3 2-5 5-6z" fill="#a9d3ee" stroke="#5c93b8" />
        <circle cx="7" cy="9" r="1.500" fill="#e84b3c" />
        <circle cx="12" cy="8" r="1.500" fill="#f5c518" />
        <circle cx="6" cy="14" r="1.500" fill="#3fa34d" />
        <path d="M18 0c2 2-3 8-6 13l-1-1C13 7 16 1 18 0z" fill="#d69449" />
      </LaunchIcon>
      <LaunchIcon label="Яндекс">
        <circle cx="10" cy="10" r="9.500" fill="#fff" />
        <path d="m5.500 4 4.500 7 4-7M10 10v7" stroke="#e52620" strokeWidth="2.400" />
      </LaunchIcon>
      <LaunchIcon label="Skype">
        <circle cx="7" cy="7" r="6.500" fill="#1aa0e8" />
        <circle cx="13" cy="13" r="6.500" fill="#1aa0e8" />
        <circle cx="10" cy="10" r="8.500" fill="#1aa0e8" />
        <path d="M13.500 7c-1.500-2.500-7-2-7 .500 0 3.500 7 1.500 7 5 0 2.500-5.500 3-7 .500" stroke="#fff" strokeWidth="2" />
      </LaunchIcon>
      <LaunchIcon label="Telegram">
        <circle cx="10" cy="10" r="10" fill="#2d9bd8" />
        <path d="m3.500 9.800 12-4.600-2 10.300-4-3-2 2-.600-3.500 6-4.500-7.400 4z" fill="#fff" />
      </LaunchIcon>
    </div>
    <div className="ml-1.5 h-full">
      <Task label="ИГРЫ">
        <Svg size={20} box={20}>
          <path d="M3 1h8l2 2v16H3z" fill="#f5cf62" />
          <path d="M3 3 6 1v18H3z" fill="#fbe49a" />
        </Svg>
      </Task>
    </div>
    <div className="ml-[5px] flex h-full">
      <LaunchIcon label="Opera">
        <ellipse cx="10" cy="10" rx="7.500" ry="8.500" stroke="#e0121c" strokeWidth="3" />
        <ellipse cx="10" cy="10" rx="4" ry="7" stroke="#e0121c" strokeWidth="2" />
      </LaunchIcon>
      <LaunchIcon label="Chrome">
        <circle cx="10" cy="10" r="10" fill="#fbc116" />
        <path d="M10 10 1.300 5A10 10 0 0 1 18.700 5z" fill="#e33b2e" />
        <path d="M10 10 1.300 5A10 10 0 0 0 9 20z" fill="#2ba24c" />
        <circle cx="10" cy="10" r="4.800" fill="#fff" />
        <circle cx="10" cy="10" r="3.700" fill="#3f7ee8" />
      </LaunchIcon>
    </div>
    <div className="ml-1.5 flex h-full gap-1.5">
      <Task label="* 2226 · Входящие — ...">
        <Svg size={20} box={20}>
          <circle cx="10" cy="10" r="10" fill="#0f7bc8" />
          <path d="M0 9C1 2 8-1 14 1c5 2 7 7 5 10-2 2-6 2-6 0 2-5-6-7-13-2z" fill="#35c0a0" />
          <path d="M7 10c-1 5 4 9 11 6-3 5-10 5-14 1-3-5-1-9 6-9-2 0-3 1-3 2z" fill="#0b4f9c" />
        </Svg>
      </Task>
      <Task label="1250318 - AMPGlobal..." wide active><MetaLogo size={20} /></Task>
      <Task label="Windows Marriage">
        <Svg size={20} box={20}>
          <path d="m6 0 3 4 4-2 1 4 5 0-2 5 3 4-5 0 0 4-5-2-4 3-1-4-5 0 2-5-2-5 4 0z" fill="#f7d81c" />
          <path d="M7 2c3 2 4 4 5 6 0 3-3 3-4 1v5H6V9c-2 2-5 1-5-1 1-2 4-4 6-6z" fill="#000" />
          <path d="m13 17-5-5c-1-3 3-5 5-2 2-3 6-1 5 2z" fill="#e0161f" />
          <path d="M2 13l3 5M15 3l3 4" stroke="#000" strokeWidth="2" />
        </Svg>
      </Task>
    </div>
    <div className="ml-auto flex h-full items-center text-sm">
      <svg width="20" height="20" viewBox="0 0 20 20" fill="none" stroke="#000" className="mr-2.5"><path d="M5.500 3.500h14v10H5M12.500 14v4M8 18.500h9M.5 2.500h5v4h-5zM3.500 7v11.500h5" /></svg>
      <svg width="20" height="18" viewBox="0 0 20 18" fill="none" stroke="#000" className="mr-2.5"><path d="M1 6.500h3l4-4v13l-4-4H1zM10.500 7c1 1.500 1 3 0 4M13 5c2 3 2 5 0 8M16 3c3 4 3 8 0 12" /></svg>
      <svg width="21" height="21" viewBox="0 0 21 21" className="mr-2.5">
        <rect x="1" y="1" width="18" height="14" rx="2" fill="#dff3dd" stroke="#2f9a35" strokeWidth="2.500" />
        <circle cx="7" cy="7" r="2" /><circle cx="13" cy="7" r="2" />
        <path d="M0 18.500h20" stroke="#2f9a35" strokeWidth="4" />
        <circle cx="18" cy="3" r="3" fill="#f04a3e" />
      </svg>
      <svg width="19" height="20" viewBox="0 0 19 20" fill="none" className="mr-3.5">
        <rect x="1" y="1" width="17" height="18" rx="5" fill="#f4fafa" stroke="#0b8b8f" strokeWidth="2" />
        <path d="M5.500 10.500h8c0-6-8-6-8 0 0 5 5 5 8 3" stroke="#0b8b8f" strokeWidth="2.400" />
      </svg>
      <span className="mr-[18px]">РУС</span>
      <time className="mr-2">21:56</time>
      <div className="h-full w-[6px] border-l border-[#a9b6c2]" />
    </div>
  </nav>
);

export default function App() {
  return (
    <div className="flex min-h-screen flex-col bg-[#f0f0f0] font-['Open_Sans','Noto_Sans',sans-serif] text-black">
      <TitleBar />
      <nav className="flex h-[25px] items-center gap-[26px] pl-[13px] text-sm">
        {MENU.map((m) => (
          <button key={m}>{m}</button>
        ))}
      </nav>
      <Toolbar />
      <FrameBar />

      <div className="flex border-b border-[#a0a0a0]">
        <Navigator />
        <main className="min-w-0 flex-1">
          <div className="flex border-t-2 border-r-2 border-b border-[#696969]">
            <ChartWindow name="MESM21,M1" buttons={[{ label: "Disable BUY", on: true }, { label: "Enable SELL" }]}>
              <Chart
                title={"MESM21, M1:\u00a0 Micro E-mini S&P 500 ($5): June 2021"}
                expert="ScalpEx_2(Revers)_EA_license"
                firstPrice={4225.5}
                priceStep={1.25}
                firstY={34}
                stepY={32.2}
                rows={16}
                candles={candlesRevers}
                candleGap={16}
                bodyWidth={11}
                bidY={169}
                markerX={401.5}
                times={["7 Jun 2021", "7 Jun 18:39", "7 Jun 18:47", "7 Jun 18:55"]}
                dots={dotsRevers}
                entryY={226.5}
                trend={[1.5, 213.5, 369.5, 169]}
                tags={[
                  { x: 50.5, y: 179.5, text: "4219.25", color: "#0000ff", dotX: 177.5, dotY: 194.5 },
                  { x: 114.5, y: 205.5, text: "4218.25", color: "#ff6347", dotX: 241.5, dotY: 221 },
                ]}
              />
            </ChartWindow>
            <ChartWindow name="EPM21,M5" active>
              <Chart
                title={"EPM21, M5:\u00a0 E-Mini S&P 500: June 2021"}
                note="2021.06.07 18:56:02; EPM21"
                firstPrice={4232.25}
                priceStep={2.5}
                firstY={5}
                stepY={34.45}
                rows={12}
                candles={candlesMini}
                candleGap={8}
                bodyWidth={5}
                bidY={171}
                markerX={385.5}
                times={["7 Jun 2021", "7 Jun 16:15", "7 Jun 17:35", "7 Jun 18:55"]}
                bands={[
                  [2, 3, 15, "#8484ff"],
                  [2, 113, 15, "#b0b0ff"],
                  [202, 237, 14, "#b0b0ff"],
                  [2, 251, 15, "#8484ff"],
                ]}
                volumes={volumesMini}
              />
            </ChartWindow>
            <ChartWindow name="MESM21,M1" buttons={[{ label: "Enable BUY" }, { label: "Enable SELL" }]}>
              <Chart
                title={"MESM21, M1:\u00a0 Micro E-mini S&P 500 ($5): June 2021"}
                expert="ScalpEx_2_EA_license"
                firstPrice={4224.25}
                priceStep={1.25}
                firstY={38}
                stepY={36.46}
                rows={14}
                candles={candlesMicro}
                candleGap={16}
                bodyWidth={11}
                bidY={155}
                markerX={385.5}
                times={["7 Jun 2021", "7 Jun 18:40", "7 Jun 18:48", "7 Jun 18:56"]}
                dots={dotsMicro}
                trend={[1.5, 203.5, 353.5, 155]}
                tags={[
                  { x: 194.5, y: 161.5, text: "4219.50", color: "#ff6347", dotX: 321.5, dotY: 177 },
                  { x: 98.5, y: 197.5, text: "4218.25", color: "#008000", dotX: 225.5, dotY: 212.5 },
                ]}
              />
            </ChartWindow>
          </div>
          <div className="h-0.5" />
          <WindowTabs />
        </main>
      </div>

      <Toolbox />
      <StatusBar />
      <Taskbar />
    </div>
  );
}
